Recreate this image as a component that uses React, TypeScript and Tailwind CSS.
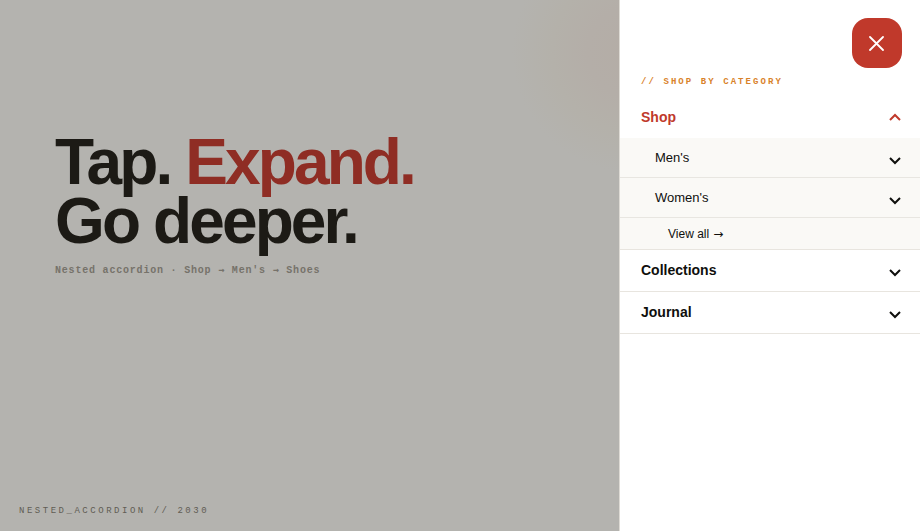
import type { ReactNode } from "react";

type ChevronProps = {
  open?: boolean;
};

function Chevron({ open = false }: ChevronProps) {
  return (
    <svg
      viewBox="0 0 12 8"
      className={open ? "h-2 w-3 shrink-0 rotate-180" : "mt-1.5 h-2 w-3 shrink-0"}
      fill="none"
      stroke="currentColor"
      strokeWidth="2"
      aria-hidden="true"
    >
      <path d="M1 1 6 6 11 1" />
    </svg>
  );
}

type AccordionItemProps = {
  label: string;
  open?: boolean;
  children?: ReactNode;
};

function AccordionItem({ label, open = false, children }: AccordionItemProps) {
  return (
    <li className={open ? "" : "border-b border-[#e8e5df]"}>
      <button
        type="button"
        aria-expanded={open}
        className={
          open
            ? "flex h-[41px] w-full items-center justify-between pr-[19px] pb-0.5 pl-[21px] text-left text-sm font-bold text-[#c0392b]"
            : "flex h-[41px] w-full items-center justify-between pr-[19px] pb-0.5 pl-[21px] text-left text-sm font-bold text-[#0f0f0d]"
        }
      >
        {label}
        <Chevron open={open} />
      </button>
      {children}
    </li>
  );
}

function SubItem({ label }: { label: string }) {
  return (
    <li className="border-b border-[#e8e6e1]">
      <button
        type="button"
        aria-expanded={false}
        className="flex h-[39px] w-full items-center justify-between pr-[19px] pl-[35px] text-left text-[13px] text-[#0f0f0d]"
      >
        {label}
        <Chevron />
      </button>
    </li>
  );
}

function Drawer() {
  return (
    <aside className="flex w-[301px] shrink-0 flex-col border-l border-[#dedbd5] bg-white">
      <div className="flex justify-end pt-[18px] pr-[18px]">
        <button
          type="button"
          aria-label="Close menu"
          className="flex size-[50px] items-center justify-center rounded-2xl bg-[#c0392b] text-white"
        >
          <svg
            viewBox="0 0 16 16"
            className="size-4"
            fill="none"
            stroke="currentColor"
            strokeWidth="1.8"
            strokeLinecap="round"
            aria-hidden="true"
          >
            <path d="M1 2 14 15M14 2 1 15" />
          </svg>
        </button>
      </div>
      <p className="mt-2 px-[21px] font-['Liberation_Mono',monospace] text-[9px] leading-3 font-bold tracking-[0.23em] text-[#d9822b]">
        // SHOP BY CATEGORY
      </p>
      <nav className="mt-[9px]">
        <ul>
          <AccordionItem label="Shop" open>
            <ul className="border-b border-[#e8e5df] bg-[#faf9f6]">
              <SubItem label="Men's" />
              <SubItem label="Women's" />
              <li>
                <a
                  href="#shop"
                  className="flex h-[31px] items-center gap-1 pl-12 text-xs text-[#0f0f0d]"
                >
                  View all{" "}
                  <span className="font-['DejaVu_Sans',sans-serif]">→</span>
                </a>
              </li>
            </ul>
          </AccordionItem>
          <AccordionItem label="Collections" />
          <AccordionItem label="Journal" />
        </ul>
      </nav>
    </aside>
  );
}

function MonoArrow() {
  return <span className="font-['DejaVu_Sans_Mono',monospace]">→</span>;
}

export default function App() {
  return (
    <div className="flex min-h-screen bg-[#b4b3af] font-['Liberation_Sans',Arial,sans-serif]">
      <main className="flex min-w-0 flex-1 flex-col justify-between bg-[radial-gradient(circle_at_calc(100%+13px)_52px,#b4ada6_0px,#b4aea8_45px,#b4b1aa_80px,#b4b3af_120px)]">
        <div className="pt-[133px] pl-[55px]">
          <h1 className="text-[64px] leading-[59px] font-bold tracking-[-0.045em] text-[#1c1a15]">
            Tap. <span className="text-[#8f2d24]">Expand.</span>
            <br />
            Go deeper.
          </h1>
          <p className="mt-[13px] font-['Liberation_Mono',monospace] text-[10px] leading-3 font-bold tracking-[0.08em] text-[#76726a]">
            Nested accordion · Shop <MonoArrow /> Men's <MonoArrow /> Shoes
          </p>
        </div>
        <footer className="px-[19px] pb-3.5 font-['Liberation_Mono',monospace] text-[9px] leading-3 tracking-[0.28em] text-[#615d54]">
          NESTED_ACCORDION // 2030
        </footer>
      </main>
      <Drawer />
    </div>
  );
}
